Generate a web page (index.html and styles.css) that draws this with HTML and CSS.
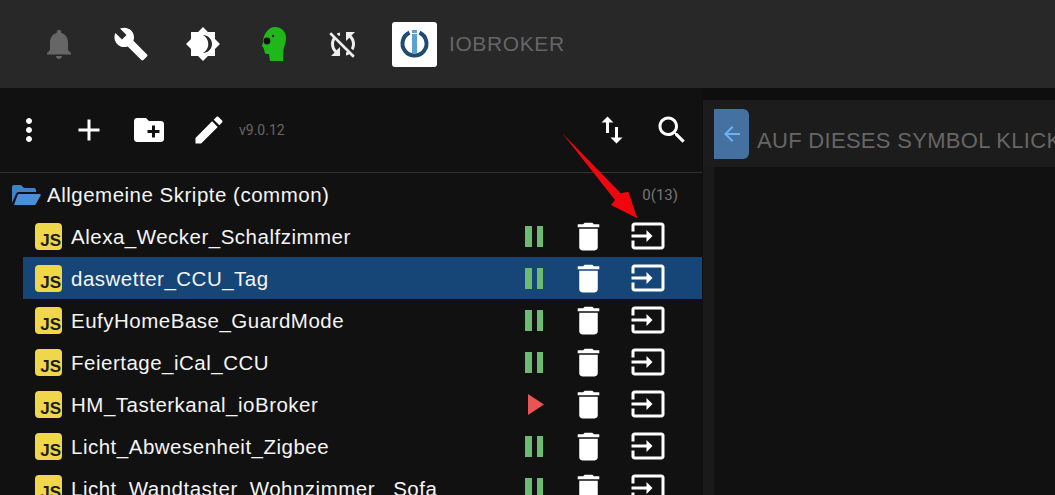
FILE: index.html
```html
<!DOCTYPE html>
<html lang="de">
<head>
<meta charset="utf-8">
<title>ioBroker Skripte</title>
<link rel="stylesheet" href="styles.css">
</head>
<body>
<svg class="defs" aria-hidden="true">
  <symbol id="pause" viewBox="0 0 24 24"><path d="M3 2h7v21H3zM15 2h6v21h-6z"/></symbol>
  <symbol id="trash" viewBox="0 0 24 24"><path d="M6 19c0 1.1.9 2 2 2h8c1.1 0 2-.9 2-2V7H6v12zM19 4h-3.5l-1-1h-5l-1 1H5v2h14V4z"/></symbol>
  <symbol id="input" viewBox="0 0 24 24"><path d="M21 3.01H3c-1.1 0-2 .9-2 2V9h2V4.99h18v14.03H3V15H1v4.01c0 1.1.9 1.98 2 1.98h18c1.1 0 2-.88 2-1.98v-14c0-1.11-.9-2-2-2zM11 16l4-4-4-4v3H1v2h10v3z"/></symbol>
</svg>
<header class="topbar">
  <svg class="ico bell" viewBox="0 0 24 24"><path d="M12 22c1.1 0 2-.9 2-2h-4c0 1.1.89 2 2 2zm6-6v-5c0-3.07-1.64-5.64-4.5-6.32V4c0-.83-.67-1.5-1.5-1.5s-1.5.67-1.5 1.5v.68C7.63 5.36 6 7.92 6 11v5l-2 2v1h16v-1l-2-2z"/></svg>
  <svg class="ico" viewBox="0 0 24 24"><path d="M22.7 19l-9.1-9.1c.9-2.3.4-5-1.5-6.9-2-2-5-2.4-7.4-1.3L9 6 6 9 1.6 4.7C.4 7.1.9 10.1 2.9 12.1c1.9 1.9 4.6 2.4 6.9 1.5l9.1 9.1c.4.4 1 .4 1.4 0l2.3-2.3c.5-.4.5-1.1.1-1.4z"/></svg>
  <svg class="ico" viewBox="0 0 24 24"><path fill-rule="evenodd" d="M20 8.69V4h-4.69L12 .69 8.69 4H4v4.69L.69 12 4 15.31V20h4.69L12 23.31 15.31 20H20v-4.69L23.31 12 20 8.69zM12 18c3.31 0 6-2.69 6-6s-2.69-6-6-6c1.9 1 3.5 3.2 3.5 6s-1.6 5-3.5 6z"/></svg>
  <svg class="ico head" viewBox="0 0 36 36">
    <path class="head-skin" d="M18 1C25 1 29 6 29 12C29 17 27 20 26.500 24L26 35H13L12 28H9.500C8 28 7.500 26 7.500 25L6.500 22L5 20L6 16C6 9 11 1 18 1z"/>
    <circle class="head-eye" cx="10" cy="15" r="3.4"/>
    <circle class="head-eye" cx="16" cy="10" r="1.2"/>
  </svg>
  <svg class="ico sync" viewBox="0 0 24 24"><path d="M10 6.35V4.26c-.8.21-1.55.54-2.23.96l1.46 1.46c.25-.12.5-.24.77-.33zm-7.14-.94l2.36 2.36C4.45 8.99 4 10.44 4 12c0 2.21.91 4.2 2.36 5.64L4 20h6v-6l-2.24 2.24C6.68 15.15 6 13.66 6 12c0-1 .25-1.94.68-2.77l8.08 8.08c-.25.13-.5.25-.77.34v2.09c.8-.21 1.55-.54 2.23-.96l2.36 2.36 1.27-1.27L4.14 4.14 2.86 5.41zM20 4h-6v6l2.24-2.24C17.32 8.85 18 10.34 18 12c0 1-.25 1.94-.68 2.77l1.46 1.46C19.55 15.01 20 13.56 20 12c0-2.21-.91-4.2-2.36-5.64L20 4z"/></svg>
  <div class="logo">
    <svg viewBox="0 0 45 45">
      <path class="logo-ring" d="M17.5 10.600A12 12 0 1 0 27.500 10.600"/>
      <rect class="logo-bar" x="20" y="12" width="5" height="19"/>
      <rect class="logo-dot" x="20" y="8" width="5" height="3"/>
    </svg>
  </div>
  <span class="brand">IOBROKER</span>
</header>
<main class="workspace">
  <section class="side">
    <div class="tools">
      <svg class="ico" viewBox="0 0 24 24"><path d="M12 8c1.1 0 2-.9 2-2s-.9-2-2-2-2 .9-2 2 .9 2 2 2zm0 2c-1.1 0-2 .9-2 2s.9 2 2 2 2-.9 2-2-.9-2-2-2zm0 6c-1.1 0-2 .9-2 2s.9 2 2 2 2-.9 2-2-.9-2-2-2z"/></svg>
      <svg class="ico" viewBox="0 0 24 24"><path d="M19 13h-6v6h-2v-6H5v-2h6V5h2v6h6v2z"/></svg>
      <svg class="ico" viewBox="0 0 24 24"><path d="M20 6h-8l-2-2H4c-1.11 0-1.99.89-1.99 2L2 18c0 1.11.89 2 2 2h16c1.11 0 2-.89 2-2V8c0-1.11-.89-2-2-2zm-1 8h-3v3h-2v-3h-3v-2h3V9h2v3h3v2z"/></svg>
      <svg class="ico" viewBox="0 0 24 24"><path d="M3 17.25V21h3.75L17.81 9.94l-3.75-3.75L3 17.25zM20.71 7.04c.39-.39.39-1.02 0-1.41l-2.34-2.34c-.39-.39-1.02-.39-1.41 0l-1.83 1.83 3.75 3.75 1.83-1.83z"/></svg>
      <span class="version">v9.0.12</span>
      <svg class="ico swap" viewBox="0 0 24 24"><path d="M16 17.01V10h-2v7.01h-3L15 21l4-3.99h-3zM9 3L5 6.99h3V14h2V6.99h3L9 3z"/></svg>
      <svg class="ico" viewBox="0 0 24 24"><path d="M15.5 14h-.79l-.28-.27C15.41 12.59 16 11.11 16 9.5 16 5.91 13.09 3 9.5 3S3 5.91 3 9.5 5.91 16 9.5 16c1.61 0 3.09-.59 4.23-1.57l.27.28v.79l5 4.99L20.49 19l-4.99-5zm-6 0C7.01 14 5 11.99 5 9.5S7.01 5 9.5 5 14 7.01 14 9.5 11.99 14 9.5 14z"/></svg>
    </div>
    <div class="root-row">
      <svg class="folder" viewBox="0 0 30 22"><path class="folder-back" d="M1 19V3c0-1.2.8-2 2-2h7l3 3h10c1.2 0 2 .8 2 2v2H8c-1.500 0-2.500.7-3 2z"/><path d="M3 21h20c1 0 1.600-.5 2-1.300l4.600-8.200c.4-.8 0-1.500-1-1.500H8.500c-1 0-1.600.4-2 1.200z"/></svg>
      <span class="root-name">Allgemeine Skripte (common)</span>
      <span class="count">0(13)</span>
    </div>
    <ul class="list">
      <li class="row"><span class="js">JS</span><span class="name">Alexa_Wecker_Schalfzimmer</span><span class="act state"><svg class="pause"><use href="#pause"/></svg></span><span class="act del"><svg class="bin"><use href="#trash"/></svg></span><span class="act exp"><svg class="ico"><use href="#input"/></svg></span></li>
      <li class="row selected"><span class="js">JS</span><span class="name">daswetter_CCU_Tag</span><span class="act state"><svg class="pause"><use href="#pause"/></svg></span><span class="act del"><svg class="bin"><use href="#trash"/></svg></span><span class="act exp"><svg class="ico"><use href="#input"/></svg></span></li>
      <li class="row"><span class="js">JS</span><span class="name">EufyHomeBase_GuardMode</span><span class="act state"><svg class="pause"><use href="#pause"/></svg></span><span class="act del"><svg class="bin"><use href="#trash"/></svg></span><span class="act exp"><svg class="ico"><use href="#input"/></svg></span></li>
      <li class="row"><span class="js">JS</span><span class="name">Feiertage_iCal_CCU</span><span class="act state"><svg class="pause"><use href="#pause"/></svg></span><span class="act del"><svg class="bin"><use href="#trash"/></svg></span><span class="act exp"><svg class="ico"><use href="#input"/></svg></span></li>
      <li class="row"><span class="js">JS</span><span class="name">HM_Tasterkanal_ioBroker</span><span class="act state"><svg class="play" viewBox="0 0 16 21"><path d="M0 0l16 10.500L0 21z"/></svg></span><span class="act del"><svg class="bin"><use href="#trash"/></svg></span><span class="act exp"><svg class="ico"><use href="#input"/></svg></span></li>
      <li class="row"><span class="js">JS</span><span class="name">Licht_Abwesenheit_Zigbee</span><span class="act state"><svg class="pause"><use href="#pause"/></svg></span><span class="act del"><svg class="bin"><use href="#trash"/></svg></span><span class="act exp"><svg class="ico"><use href="#input"/></svg></span></li>
      <li class="row"><span class="js">JS</span><span class="name">Licht_Wandtaster_Wohnzimmer _Sofa</span><span class="act state"><svg class="pause"><use href="#pause"/></svg></span><span class="act del"><svg class="bin"><use href="#trash"/></svg></span><span class="act exp"><svg class="ico"><use href="#input"/></svg></span></li>
    </ul>
  </section>
  <section class="detail">
    <div class="detail-bar">
      <span class="back"><svg viewBox="0 0 24 24"><path d="M20 11H7.830l5.590-5.590L12 4l-8 8 8 8 1.410-1.410L7.830 13H20v-2z"/></svg></span>
      <span class="hint">AUF DIESES SYMBOL KLICK</span>
    </div>
    <div class="detail-body"></div>
  </section>
</main>
<svg class="arrow" viewBox="0 0 90 100"><path d="M2.300 3.300L60.700 63.300L68.300 61.700L77.300 88.300L51 75L55 70z"/></svg>
</body>
</html>
```
FILE: styles.css
```css
* { box-sizing: border-box; }
html, body { margin: 0; height: 100%; overflow: hidden; }
body {
  position: relative;
  background: #0e0e0e;
  color: #eee;
  font-family: "Liberation Sans", Arial, sans-serif;
  display: flex;
  flex-direction: column;
}
.defs { width: 0; height: 0; position: absolute; }
.ico { width: 36px; height: 36px; fill: #fff; flex: none; display: block; }

.topbar {
  height: 88px;
  flex: none;
  background: #282828;
  display: flex;
  align-items: center;
  padding-left: 41px;
  gap: 36px;
}
.bell { fill: #666; }
.head-skin { fill: #1fb71a; }
.head-eye { fill: #111; }
.sync { fill: #eee; margin: 0 -5px 0 -4px; }
.logo {
  width: 45px;
  height: 45px;
  background: #fff;
  border-radius: 3px;
  flex: none;
}
.logo svg { width: 45px; height: 45px; display: block; }
.logo-ring { fill: none; stroke: #1f4a72; stroke-width: 4; }
.logo-bar, .logo-dot { fill: #5aa3cf; }
.brand { color: #666; font-size: 21px; margin-left: -24px; letter-spacing: .6px; }

.workspace { flex: 1; display: flex; min-height: 0; }
.side { width: 702px; flex: none; background: #111; display: flex; flex-direction: column; }
.tools {
  height: 85px;
  flex: none;
  border-bottom: 1px solid #333;
  display: flex;
  align-items: center;
  padding-left: 11px;
  gap: 24px;
}
.version { color: #666; font: 14px Roboto, sans-serif; margin-left: -12px; }
.swap { margin-left: auto; }
.tools .ico:last-child { margin-right: 12px; }

.root-row {
  height: 42px;
  flex: none;
  display: flex;
  align-items: center;
  padding: 1px 24px 0 11px;
  font-size: 20.5px;
  letter-spacing: .5px;
}
.folder { width: 30px; height: 22px; fill: #4a90d9; flex: none; margin-right: 6px; }
.folder-back { fill: #3f82c8; }
.root-name { color: #f5f5f5; }
.count { margin-left: auto; color: #777; font: 15px Roboto, sans-serif; letter-spacing: 0; }

.list { list-style: none; margin: 0; padding: 0; }
.row {
  height: 42px;
  margin-left: 23px;
  padding: 0 18px 0 12px;
  display: flex;
  align-items: center;
  font-size: 20.5px;
  letter-spacing: .5px;
}
.row.selected { background: #164677; }
.js {
  width: 27px;
  height: 27px;
  flex: none;
  background: #f0d64b;
  border-radius: 4px;
  color: #1c1c1c;
  font: bold 17px/1 "Liberation Sans", sans-serif;
  letter-spacing: 0;
  display: flex;
  align-items: flex-end;
  justify-content: flex-end;
  padding: 0 1px 1px 0;
  margin-right: 9px;
}
.name { flex: 1; color: #f5f5f5; white-space: nowrap; overflow: hidden; padding-top: 2px; }
.act { display: flex; justify-content: center; align-items: center; flex: none; }
.state { width: 60px; }
.del { width: 48px; }
.exp { width: 72px; }
.bin { width: 37px; height: 37px; fill: #fff; display: block; }
.pause { width: 24px; height: 24px; fill: #6dba72; }
.play { width: 16px; height: 21px; fill: #e95454; margin-left: 4px; }

.detail { flex: 1; min-width: 0; display: flex; flex-direction: column; padding-top: 12px; overflow: hidden; }
.detail-bar {
  height: 67px;
  flex: none;
  background: #1c1c1c;
  display: flex;
  align-items: center;
  padding-left: 11px;
  margin-left: 1px;
  white-space: nowrap;
  overflow: hidden;
}
.back {
  width: 35px;
  height: 50px;
  flex: none;
  background: #44719f;
  border-radius: 0 6px 6px 0;
  display: flex;
  align-items: center;
  justify-content: center;
  margin-top: 1px;
}
.back svg { width: 24px; height: 24px; fill: #6ab2f2; }
.hint { color: #666; font-size: 22px; margin-left: 8px; margin-top: 14px; letter-spacing: .3px; }
.detail-body { flex: 1; background: #111; margin-left: 1px; border-left: 11px solid #1a1a1a; }

.arrow { position: absolute; left: 560px; top: 130px; width: 90px; height: 100px; fill: #f2060e; }
```
